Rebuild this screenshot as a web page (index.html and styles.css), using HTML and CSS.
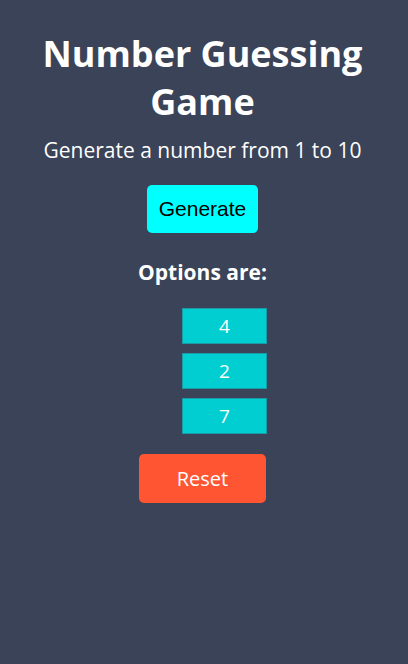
FILE: index.html
```html
<!DOCTYPE html>
<html lang="en">
<head>
<meta charset="utf-8">
<title>Number Guessing Game</title>
<link rel="stylesheet" href="styles.css">
</head>
<body>
<div class="app">
  <h1 class="title">Number Guessing Game</h1>
  <p class="subtitle">Generate a number from 1 to 10</p>
  <button class="btn-generate">Generate</button>
  <h3 class="options-label">Options are:</h3>
  <ul class="options">
    <li class="option">4</li>
    <li class="option">2</li>
    <li class="option">7</li>
  </ul>
  <button class="btn-reset">Reset</button>
</div>
</body>
</html>
```
FILE: styles.css
```css
html, body {
  height: 100%;
}
body {
  margin: 0;
  padding: 8px 11px 8px 8px;
  box-sizing: border-box;
  background: #3a4357;
  color: #ffffff;
  font-family: "Open Sans", "Noto Sans", sans-serif;
  text-align: center;
}
.app {
  display: flex;
  flex-direction: column;
  align-items: center;
}
.title {
  margin: 22px 0 0;
  font-size: 36px;
  line-height: 48px;
  font-weight: 700;
}
.subtitle {
  margin: 10px 0 0;
  font-size: 21px;
  line-height: 28px;
}
.btn-generate {
  margin-top: 21px;
  width: 111px;
  height: 48px;
  border: none;
  border-radius: 5px;
  background: #00ffff;
  color: #000000;
  font-family: "Liberation Sans", Arial, sans-serif;
  font-size: 21px;
  cursor: pointer;
}
.options-label {
  margin: 25px 0 0;
  font-size: 21px;
  line-height: 28px;
  font-weight: 700;
}
.options {
  list-style: none;
  margin: 22px 0 0;
  padding: 0 0 0 44px;
  align-self: stretch;
  display: flex;
  flex-direction: column;
  align-items: center;
  gap: 9px;
}
.option {
  box-sizing: border-box;
  width: 85px;
  height: 36px;
  line-height: 34px;
  background: #00ced1;
  border: 1px solid #1a9aa6;
  color: #ffffff;
  font-family: "Open Sans", "Noto Sans", sans-serif;
  font-size: 19px;
}
.btn-reset {
  margin-top: 20px;
  width: 127px;
  height: 49px;
  border: none;
  border-radius: 5px;
  background: #ff5533;
  color: #ffffff;
  font-family: "Open Sans", "Noto Sans", sans-serif;
  font-size: 20px;
  cursor: pointer;
}
```
